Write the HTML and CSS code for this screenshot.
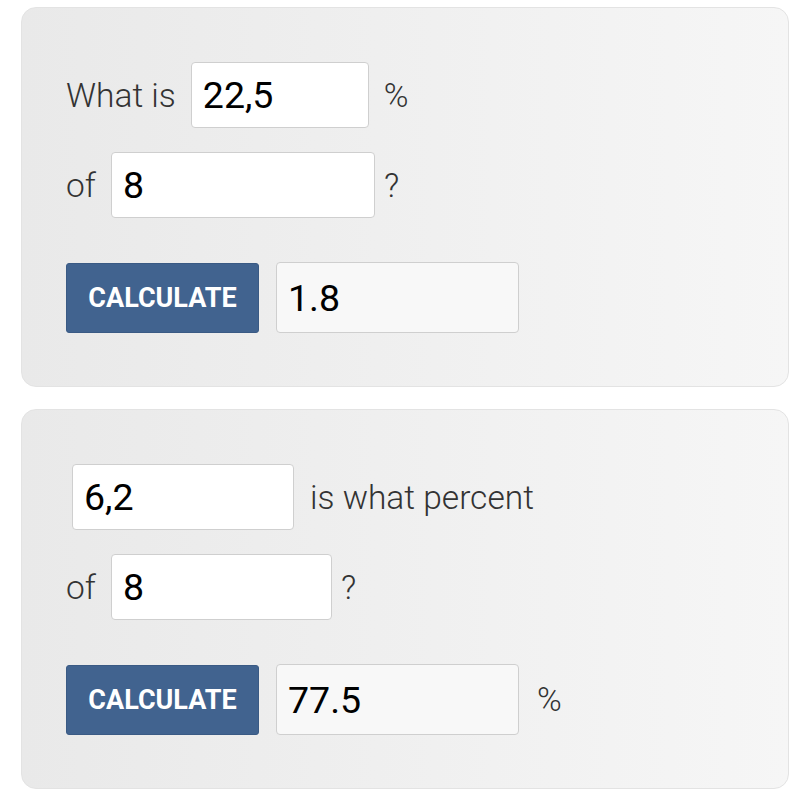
FILE: index.html
```html
<!DOCTYPE html>
<html lang="en">
<head>
    <meta charset="UTF-8">
    <meta name="viewport" content="width=device-width, initial-scale=1.0">
    <title>Percentage Calculator</title>
    <link rel="stylesheet" href="styles.css">
</head>
<body>
    <div class="calc">
        <div class="row">
            <span class="label">What is</span>
            <input type="text" class="field field-pct" value="22,5">
            <span class="label">%</span>
        </div>
        <div class="row">
            <span class="label">of</span>
            <input type="text" class="field field-of" value="8">
            <span class="label label-q">?</span>
        </div>
        <div class="row row-result">
            <button type="button" class="calc-button">Calculate</button>
            <input type="text" class="field result" value="1.8" readonly>
        </div>
    </div>

    <div class="calc">
        <div class="row">
            <input type="text" class="field field-part" value="6,2">
            <span class="label">is what percent</span>
        </div>
        <div class="row">
            <span class="label">of</span>
            <input type="text" class="field field-whole" value="8">
            <span class="label label-q">?</span>
        </div>
        <div class="row row-result">
            <button type="button" class="calc-button">Calculate</button>
            <input type="text" class="field result" value="77.5" readonly>
            <span class="label label-unit">%</span>
        </div>
    </div>
</body>
</html>
```

FILE: styles.css
```css
body {
    font-family: Roboto, "Liberation Sans", sans-serif;
    background-color: #fff;
    margin: 0;
    padding: 7px 22px 0 21px;
}
.calc {
    background: linear-gradient(to right, #e9e9e9, #f6f6f6);
    border: 1px solid #e3e3e3;
    border-radius: 15px;
    box-sizing: border-box;
    height: 380px;
    padding: 54px 0 0 44px;
    margin-bottom: 22px;
}
.row {
    display: flex;
    align-items: center;
    gap: 15px;
    margin-bottom: 24px;
}
.row-result {
    margin-top: 44px;
    gap: 17px;
}
.label {
    font-size: 33.5px;
    font-weight: 300;
    color: #333;
}
.label-q {
    margin-left: -6px;
}
.field {
    font-family: Roboto, "Liberation Sans", sans-serif;
    font-size: 37.5px;
    color: #000;
    height: 66px;
    box-sizing: border-box;
    padding: 0 11px;
    border: 1px solid #cfcfcf;
    border-radius: 4px;
    background: #fff;
    outline: none;
}
.field-pct {
    width: 178px;
}
.field-of {
    width: 264px;
}
.field-part {
    width: 222px;
    margin-left: 6px;
    margin-right: 1px;
}
.field-whole {
    width: 221px;
}
.result {
    width: 243px;
    height: 71px;
    background: #f8f8f8;
}
.calc-button {
    font-family: Roboto, "Liberation Sans", sans-serif;
    font-size: 27px;
    font-weight: 700;
    text-transform: uppercase;
    color: #fff;
    background: #41638f;
    border: 1px solid #3a5a84;
    border-radius: 3px;
    width: 193px;
    height: 70px;
    padding: 0;
}
.label-unit {
    margin-left: 1px;
}
```
